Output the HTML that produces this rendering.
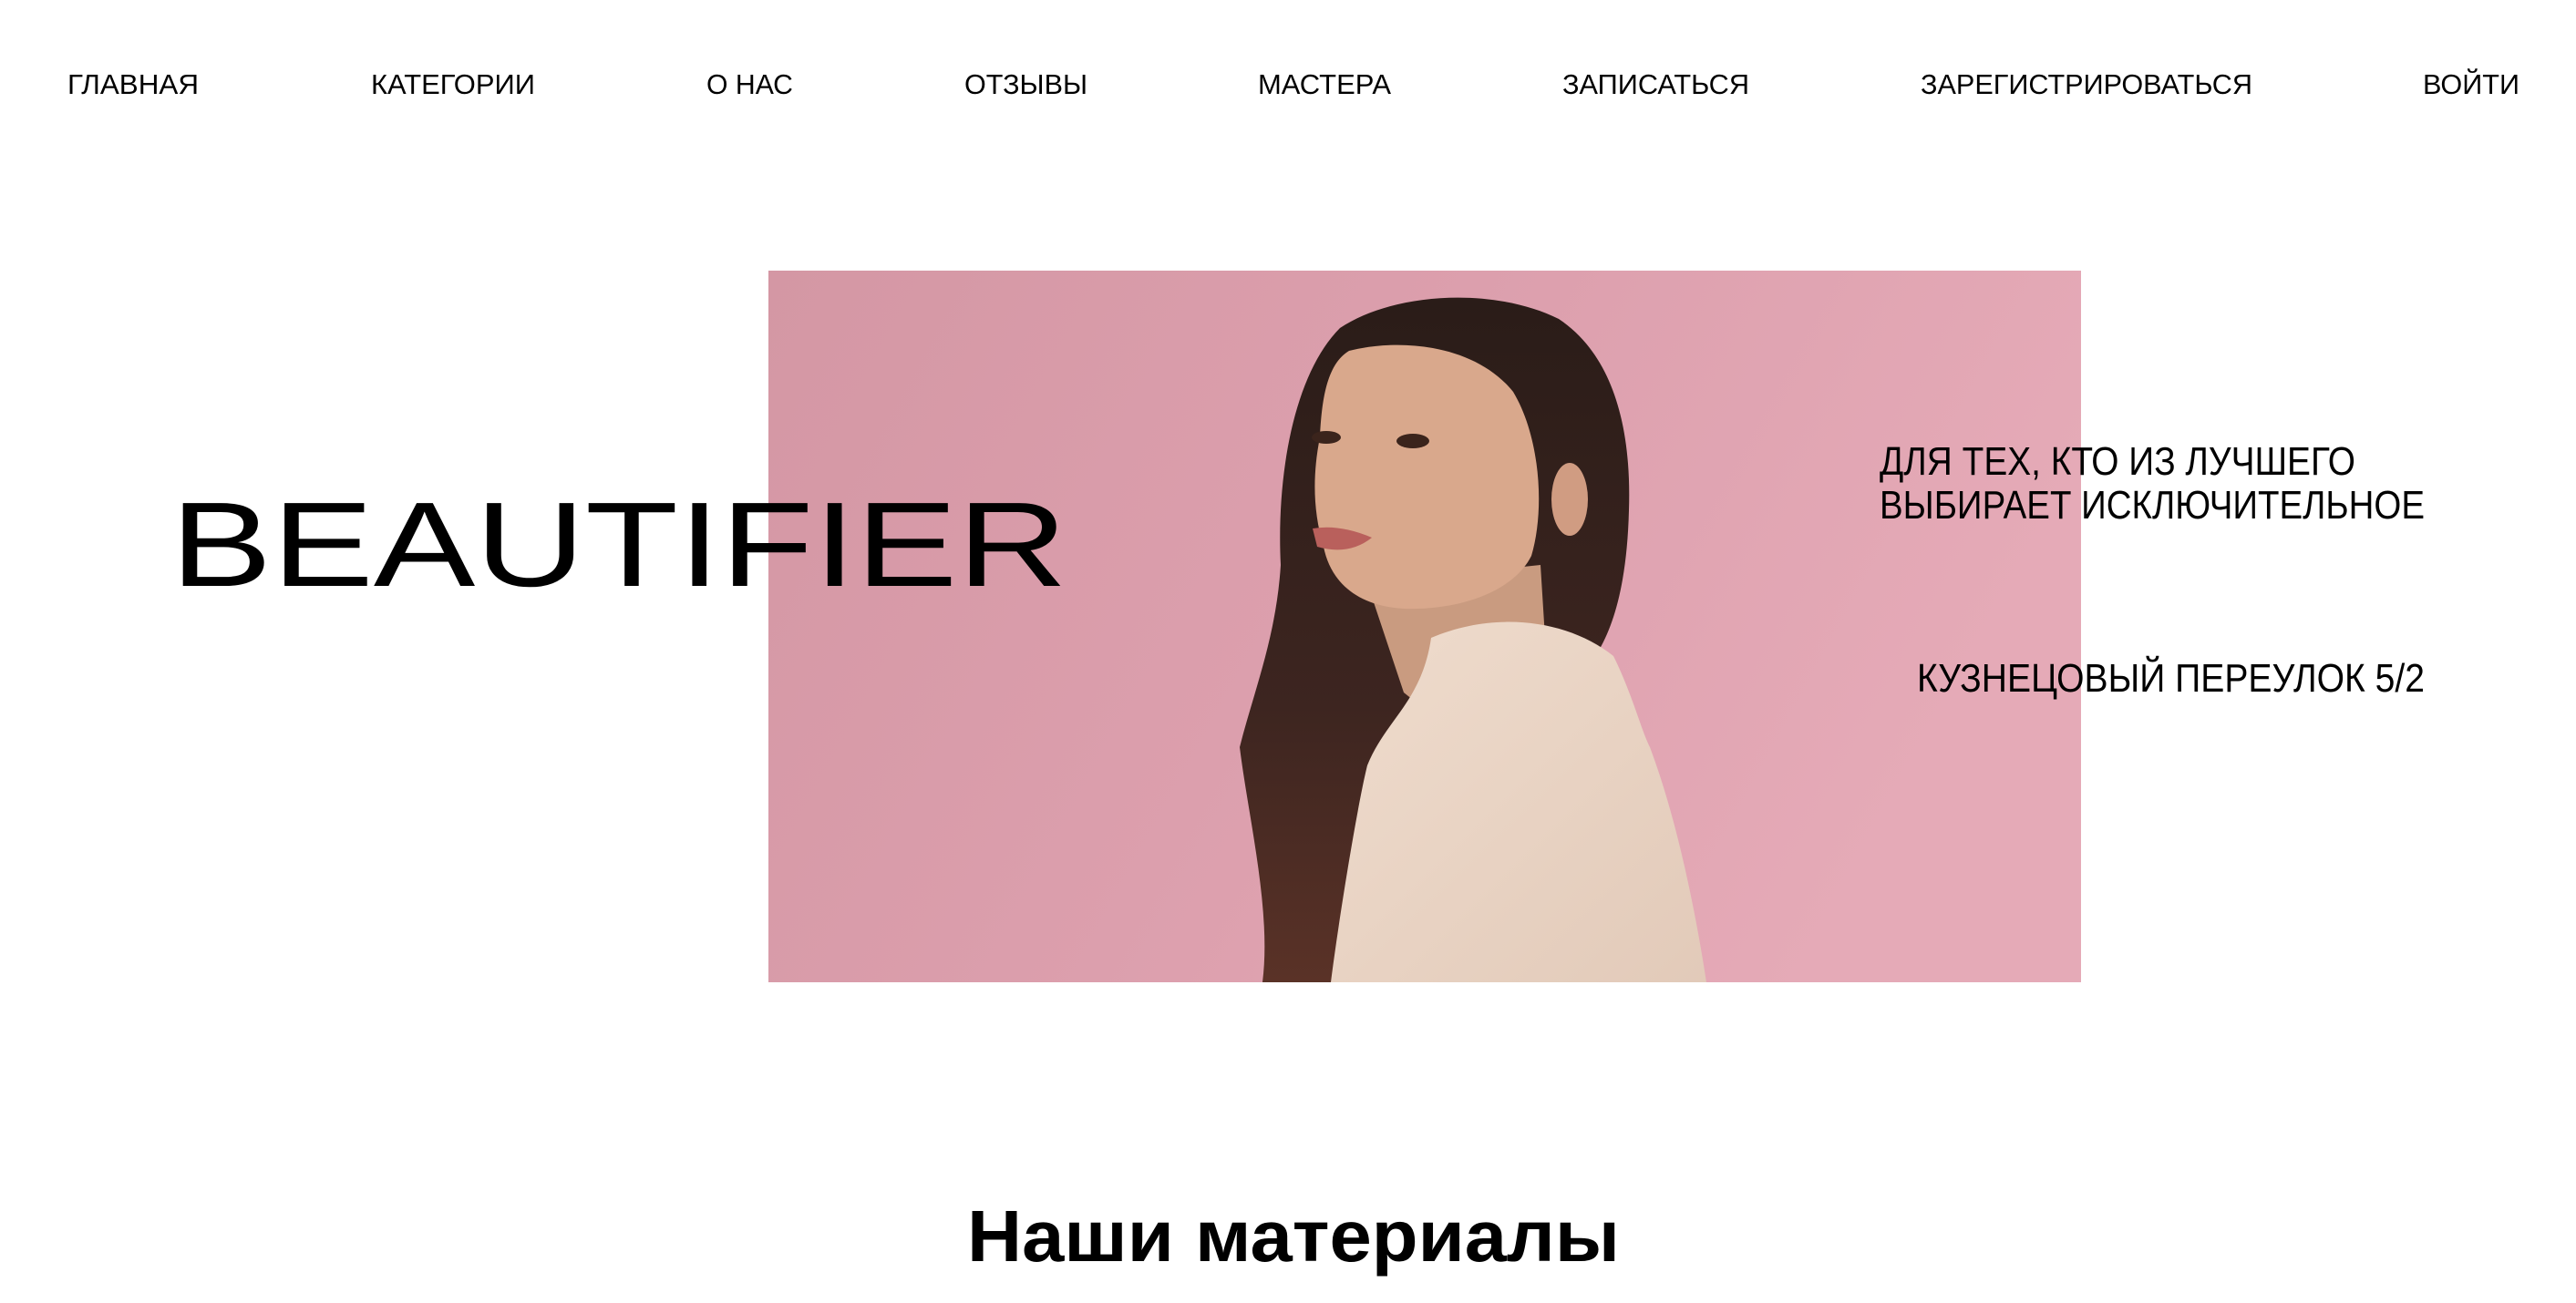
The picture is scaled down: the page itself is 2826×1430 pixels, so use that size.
<!DOCTYPE html>
<html><head><meta charset="utf-8"><style>
html,body{margin:0;padding:0;background:#fff;width:2826px;height:1430px;overflow:hidden}
svg{display:block}
</style></head><body>
<svg width="2826" height="1430" viewBox="0 0 2826 1430" xmlns="http://www.w3.org/2000/svg">
<defs>
<linearGradient id="bg" x1="0" y1="0" x2="1" y2="0.3">
<stop offset="0" stop-color="#d497a4"/><stop offset="0.5" stop-color="#dc9fad"/><stop offset="1" stop-color="#e5aab7"/>
</linearGradient>
<linearGradient id="hair" x1="0" y1="0" x2="0" y2="1">
<stop offset="0" stop-color="#2a1c18"/><stop offset="0.6" stop-color="#3d2520"/><stop offset="1" stop-color="#5a3227"/>
</linearGradient>
<linearGradient id="shirt" x1="0" y1="0" x2="1" y2="1">
<stop offset="0" stop-color="#efdccd"/><stop offset="1" stop-color="#e2cab9"/>
</linearGradient>
</defs>
<rect x="843" y="297" width="1440" height="781" fill="url(#bg)"/>
<!-- hair -->
<path d="M1470 360 C1530 320 1640 315 1710 350 C1770 390 1790 470 1787 560 C1785 640 1770 690 1750 720 L1620 720 L1560 1078 L1385 1078 C1395 1000 1370 900 1360 820 C1375 760 1400 700 1405 620 C1400 520 1420 410 1470 360 Z" fill="url(#hair)"/>
<!-- neck -->
<path d="M1500 640 L1690 620 L1700 780 L1590 800 L1540 760 Z" fill="#c99b80"/>
<!-- face -->
<path d="M1480 385 C1540 370 1620 380 1660 430 C1690 480 1695 560 1680 610 C1660 650 1600 670 1540 668 C1490 665 1460 640 1452 600 C1440 560 1440 520 1448 480 C1450 440 1455 400 1480 385 Z" fill="#d9a88c"/>
<ellipse cx="1722" cy="548" rx="20" ry="40" fill="#d09c82"/>
<path d="M1440 580 Q1470 575 1505 590 Q1480 610 1445 600 Z" fill="#b9605c"/>
<ellipse cx="1455" cy="480" rx="16" ry="7" fill="#3b241c"/>
<ellipse cx="1550" cy="484" rx="18" ry="8" fill="#3b241c"/>
<!-- shirt -->
<path d="M1570 700 C1640 670 1720 680 1770 720 C1790 760 1800 800 1810 820 C1840 900 1860 1000 1872 1078 L1460 1078 C1470 1000 1490 880 1500 840 C1520 790 1560 770 1570 700 Z" fill="url(#shirt)"/>
<!-- texts -->
<g font-family="'Liberation Sans', sans-serif" font-size="31" fill="#000">
<text x="74" y="103" textLength="144" lengthAdjust="spacingAndGlyphs">ГЛАВНАЯ</text>
<text x="407" y="103" textLength="180" lengthAdjust="spacingAndGlyphs">КАТЕГОРИИ</text>
<text x="775" y="103" textLength="95" lengthAdjust="spacingAndGlyphs">О НАС</text>
<text x="1058" y="103" textLength="135" lengthAdjust="spacingAndGlyphs">ОТЗЫВЫ</text>
<text x="1380" y="103" textLength="146" lengthAdjust="spacingAndGlyphs">МАСТЕРА</text>
<text x="1714" y="103" textLength="205" lengthAdjust="spacingAndGlyphs">ЗАПИСАТЬСЯ</text>
<text x="2107" y="103" textLength="364" lengthAdjust="spacingAndGlyphs">ЗАРЕГИСТРИРОВАТЬСЯ</text>
<text x="2658" y="103" textLength="106" lengthAdjust="spacingAndGlyphs">ВОЙТИ</text>
</g>
<text x="187" y="643" font-family="'Liberation Sans', sans-serif" font-size="132" fill="#000" textLength="984" lengthAdjust="spacingAndGlyphs">BEAUTIFIER</text>
<g font-family="'Liberation Sans', sans-serif" font-size="44" fill="#000">
<text x="2062" y="521" textLength="522" lengthAdjust="spacingAndGlyphs">ДЛЯ ТЕХ, КТО ИЗ ЛУЧШЕГО</text>
<text x="2062" y="569" textLength="598" lengthAdjust="spacingAndGlyphs">ВЫБИРАЕТ ИСКЛЮЧИТЕЛЬНОЕ</text>
<text x="2103" y="759" textLength="557" lengthAdjust="spacingAndGlyphs">КУЗНЕЦОВЫЙ ПЕРЕУЛОК 5/2</text>
</g>
<text x="1061" y="1384" font-family="'Liberation Sans', sans-serif" font-weight="bold" font-size="80" fill="#000" textLength="716" lengthAdjust="spacingAndGlyphs">Наши материалы</text>
</svg>
</body></html>
